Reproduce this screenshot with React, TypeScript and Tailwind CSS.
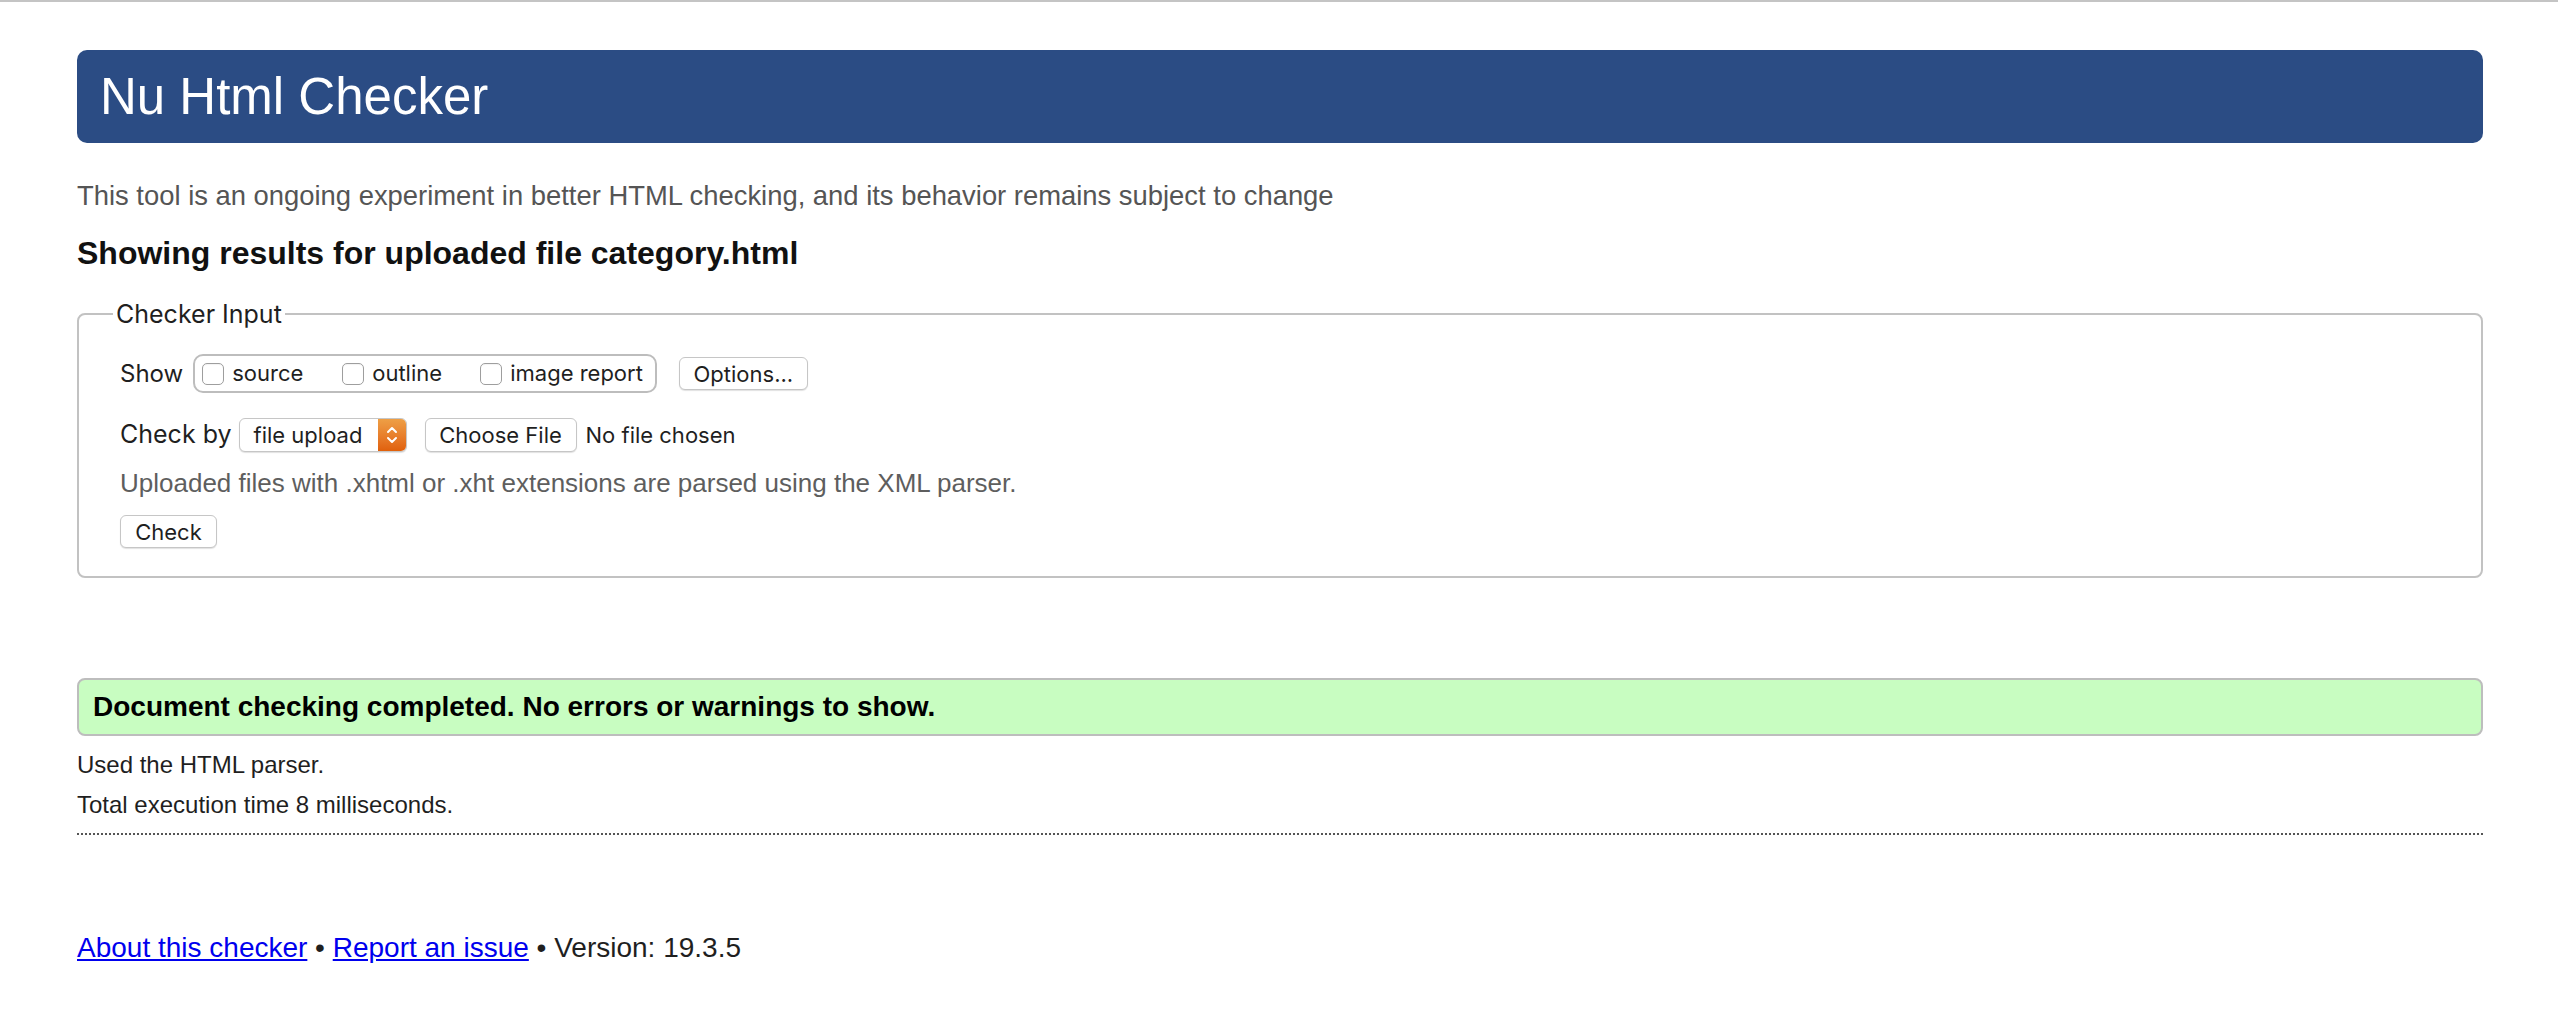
import React from "react";

function Checkbox({ label, w }: { label: string; w?: string }) {
  return (
    <label className={`flex items-center ${w ?? ""}`}>
      <span className="w-[22px] h-[22px] rounded-[5px] border border-[#9e9e9e] bg-white shadow-[inset_0_1px_1px_rgba(0,0,0,0.05)]" />
      <span className="ml-[8px]">{label}</span>
    </label>
  );
}

export default function App() {
  return (
    <div className="min-h-screen bg-white font-['Liberation_Sans',Arial,sans-serif] text-[#1f1f1f]">
      <div className="h-[2px] bg-[#c4c4c4]" />
      <div className="pl-[77px] pr-[75px] pt-[48px]">
        <div className="h-[93px] rounded-[10px] bg-[#2b4c84] flex items-center pl-[23px]">
          <h1 className="text-[51px] leading-none text-white">Nu Html Checker</h1>
        </div>
        <p className="mt-[33px] h-[40px] leading-[40px] text-[27.4px] text-[#555555]">
          This tool is an ongoing experiment in better HTML checking, and its behavior remains subject to change
        </p>
        <h2 className="mt-[17px] h-[40px] leading-[40px] text-[32px] font-bold text-[#111111]">
          Showing results for uploaded file category.html
        </h2>
        <fieldset className="mt-[25px] border-2 border-[#c2c2c2] rounded-[8px]">
          <legend className="ml-[34px] px-[3px] text-[25px] leading-[32px] font-['Inter',sans-serif] text-[#1f1f1f]">
            Checker Input
          </legend>
          <div className="pl-[41px] pb-[27px] font-['Inter',sans-serif] text-[22px] text-[#1f1f1f]">
            <div className="mt-[24px] flex items-center h-[39px]">
              <span className="text-[24px]">Show</span>
              <div className="ml-[10px] h-[39px] border-2 border-[#bdbdbd] rounded-[10px] flex items-center pl-[7px] pr-[12px]">
                <Checkbox label="source" w="w-[140px]" />
                <Checkbox label="outline" w="w-[138px]" />
                <Checkbox label="image report" />
              </div>
              <button className="ml-[22px] h-[33px] w-[129px] border border-[#c6c6c6] rounded-[6px] bg-white shadow-[0_1px_1px_rgba(0,0,0,0.12)] text-[22px] leading-none">
                Options...
              </button>
            </div>
            <div className="mt-[25px] flex items-center h-[34px]">
              <span className="text-[25px]">Check by</span>
              <div className="ml-[7px] w-[168px] h-[34px] border border-[#c6c6c6] rounded-[6px] bg-white flex items-stretch shadow-[0_1px_1px_rgba(0,0,0,0.12)] overflow-hidden">
                <span className="flex-1 flex items-center pl-[14px]">file upload</span>
                <span className="w-[28px] bg-linear-to-b from-[#ee9f45] to-[#e0600a] flex items-center justify-center">
                  <svg width="14" height="24" viewBox="0 0 14 24" fill="none" stroke="white" strokeWidth="2" strokeLinecap="round" strokeLinejoin="round">
                    <path d="M3 9 L7 5 L11 9" />
                    <path d="M3 15 L7 19 L11 15" />
                  </svg>
                </span>
              </div>
              <button className="ml-[18px] h-[34px] w-[152px] border border-[#c6c6c6] rounded-[6px] bg-white shadow-[0_1px_1px_rgba(0,0,0,0.12)] leading-none">
                Choose File
              </button>
              <span className="ml-[9px]">No file chosen</span>
            </div>
            <p className="mt-[14px] h-[34px] leading-[34px] text-[26px] text-[#5e5e5e] font-['Liberation_Sans',Arial,sans-serif]">
              Uploaded files with .xhtml or .xht extensions are parsed using the XML parser.
            </p>
            <button className="mt-[15px] h-[33px] w-[97px] border border-[#c6c6c6] rounded-[6px] bg-white shadow-[0_1px_1px_rgba(0,0,0,0.12)] leading-none">
              Check
            </button>
          </div>
        </fieldset>
        <div className="mt-[100px] h-[58px] border-2 border-[#bdbdbd] rounded-[8px] bg-[#c8fdc1] flex items-center pl-[14px]">
          <p className="text-[28px] font-bold text-black">Document checking completed. No errors or warnings to show.</p>
        </div>
        <p className="mt-[9px] h-[40px] leading-[40px] text-[24px] text-[#1f1f1f]">Used the HTML parser.</p>
        <p className="h-[40px] leading-[40px] text-[24px] text-[#1f1f1f]">Total execution time 8 milliseconds.</p>
        <div className="mt-[8px] border-b-2 border-dotted border-[#555555]" />
        <p className="mt-[93px] h-[40px] leading-[40px] text-[28px] text-[#1f1f1f]">
          <a href="#" className="text-[#0000ee] underline">About this checker</a>
          {" • "}
          <a href="#" className="text-[#0000ee] underline">Report an issue</a>
          {" • Version: 19.3.5"}
        </p>
      </div>
    </div>
  );
}
